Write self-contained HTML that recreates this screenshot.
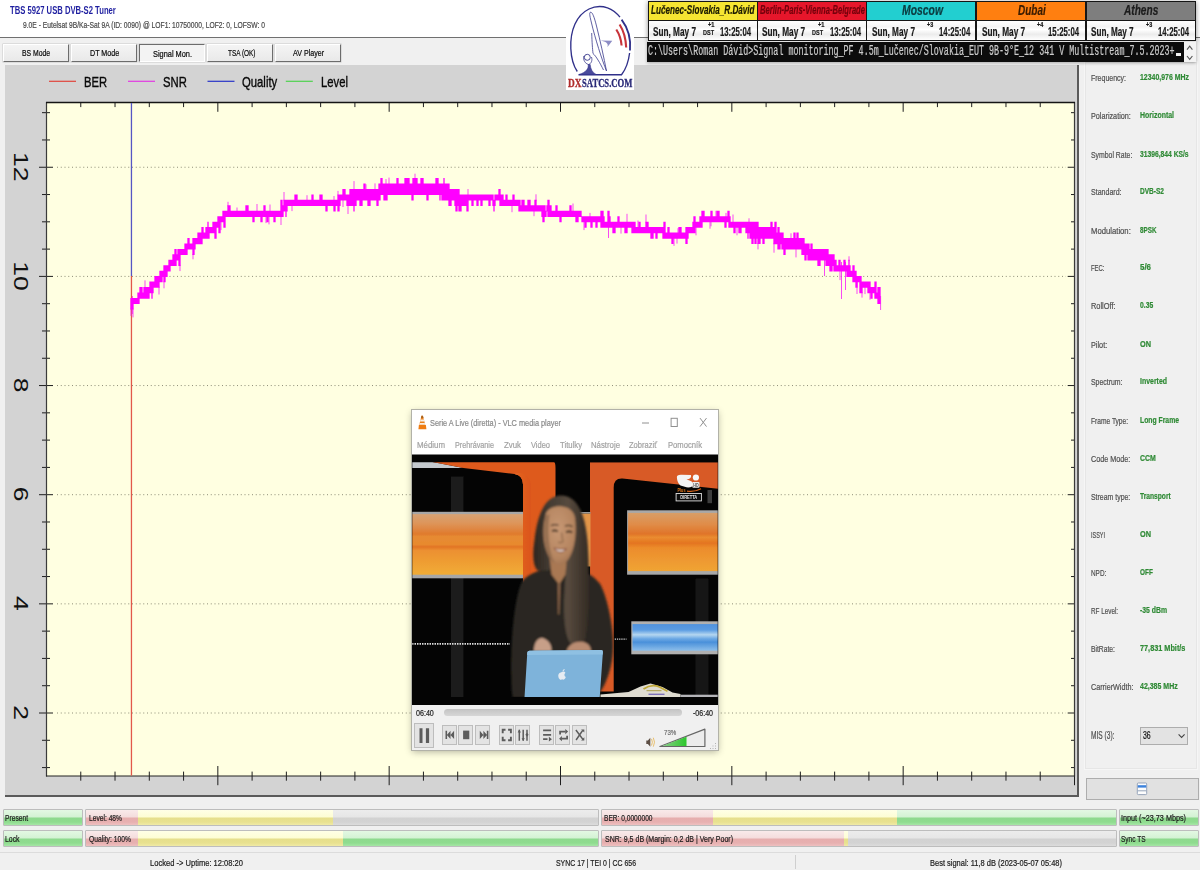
<!DOCTYPE html>
<html><head><meta charset="utf-8"><title>Signal Monitor</title>
<style>
*{box-sizing:border-box;margin:0;padding:0}
html,body{width:1200px;height:870px;overflow:hidden;background:#f0f0f0;font-family:"Liberation Sans",sans-serif}
.a{position:absolute}
#txt .t{position:absolute;display:inline-block;white-space:nowrap;line-height:1;transform-origin:0 50%;-webkit-text-stroke:.22px currentColor}
#topw{left:0;top:0;width:1200px;height:37px;background:#fff}
#topl{left:0;top:37px;width:1200px;height:1px;background:#707070}
.btn{position:absolute;top:43.5px;height:18.5px;background:linear-gradient(#f4f4f4,#e9e9e9);border:1px solid;border-color:#fff #6c6c6c #6c6c6c #fff;box-shadow:0 0 0 .5px #c8c8c8}
.btn.dn{border-color:#6c6c6c #fff #fff #6c6c6c;background:#f3f3f3}
#gp{left:4.5px;top:65px;width:1074.5px;height:732px;background:#d3d3d3;border-right:2px solid #5a5a5a;border-bottom:2px solid #5a5a5a}
#rp{left:1085px;top:62px;width:112px;height:707px;background:#f0f0f0;border:1px solid #e6e6e6;box-shadow:0 0 0 1px #f6f6f6}
#rbtn{left:1085.5px;top:777.5px;width:113px;height:22px;background:#e1e1e1;border:1px solid #adadad}
#combo{left:1140px;top:726.7px;width:47.5px;height:18px;background:#e3e3e3;border:1px solid #adadad}
.bar{position:absolute;height:17px;border:1px solid #bdbdbd;background:#e2e2e2;overflow:hidden;border-radius:1px}
.bar i{position:absolute;top:0;bottom:0;display:block}
.g{background:linear-gradient(#e3f8e3 0,#d3f2d3 48%,#8ed98e 52%,#8fdc8f 80%,#a6e6a6 100%)}
.r{background:linear-gradient(#f9eaea 0,#f4dcdc 48%,#e6aeae 52%,#e7b0b0 80%,#eec0c0 100%)}
.y{background:linear-gradient(#ffffe6 0,#fdfdd3 48%,#e6df8c 52%,#e8e190 80%,#f0eaa6 100%)}
.e{background:linear-gradient(#ececec 0,#e6e6e6 48%,#d2d2d2 52%,#d3d3d3 80%,#dcdcdc 100%)}
#sb{left:0;top:852px;width:1200px;height:18px;background:#f0f0f0;border-top:1px solid #dcdcdc}
#sb i{position:absolute;top:2px;bottom:1px;width:1px;background:#cfcfcf}
#logo{left:566px;top:0;width:68px;height:89.5px;background:#fff}
#clk{left:648px;top:1px;width:548px;height:39.6px;background:#161616;box-shadow:0 1px 5px rgba(0,0,0,.45)}
#clk .h{position:absolute;top:1.2px;height:17.6px}
#clk .d{position:absolute;top:19.8px;height:18.8px;background:linear-gradient(#fff 0,#f4f4f4 30%,#fff 45%,#ececec 70%,#fff 100%)}
#con{left:647.2px;top:42.4px;width:537px;height:19.2px;background:#0c0c0c;box-shadow:0 1px 3px rgba(0,0,0,.3)}
#csb{left:1184px;top:42.4px;width:11.6px;height:19.2px;background:#f3f3f3;box-shadow:0 1px 3px rgba(0,0,0,.3)}
#cur{left:1176px;top:53px;width:5.2px;height:3px;background:#f2f2f2}
#vlc{left:411.5px;top:409.5px;width:306px;height:340.5px;background:#fff;box-shadow:0 0 0 1px #b2b2a8,0 2px 7px rgba(0,0,0,.3)}
#vctl{left:0;top:295.1px;width:306px;height:45.4px;background:#f0f0f0}
.vb{position:absolute;top:315.5px;height:20px;width:15px;background:#e3e3e3;border:1px solid #bdbdbd}
#seek{left:32.3px;top:299px;width:238.3px;height:7px;border-radius:4px;background:linear-gradient(#c4c4c4,#d6d6d6);}

</style></head>
<body>
<div class="a" id="topw"></div><div class="a" id="topl"></div>
<div class="btn" style="left:3px;width:66px"></div>
<div class="btn" style="left:71px;width:66px"></div>
<div class="btn dn" style="left:139px;width:66px"></div>
<div class="btn" style="left:207px;width:66px"></div>
<div class="btn" style="left:275px;width:66px"></div>
<div class="a" id="gp"></div>
<div class="a" id="rp"></div>
<div class="a" id="rbtn"></div>
<div class="a" id="combo"></div>
<svg class="a" style="left:0;top:0" width="1200" height="870" viewBox="0 0 1200 870">
<rect x="46.5" y="102.5" width="1028.0" height="673.5" fill="#ffffe1"/>
<rect x="49" y="80.7" width="27" height="1.2" fill="#e0453c"/>
<rect x="128" y="80.7" width="27" height="1.2" fill="#e23be2"/>
<rect x="207.5" y="80.7" width="27" height="1.2" fill="#2a35c8"/>
<rect x="285.8" y="80.7" width="27" height="1.2" fill="#4fd24f"/>
<line x1="57" x2="1066" y1="713.00" y2="713.00" stroke="#8e8e78" stroke-width="1" stroke-dasharray="1 2.75"/>
<line x1="57" x2="1066" y1="603.85" y2="603.85" stroke="#8e8e78" stroke-width="1" stroke-dasharray="1 2.75"/>
<line x1="57" x2="1066" y1="494.70" y2="494.70" stroke="#8e8e78" stroke-width="1" stroke-dasharray="1 2.75"/>
<line x1="57" x2="1066" y1="385.55" y2="385.55" stroke="#8e8e78" stroke-width="1" stroke-dasharray="1 2.75"/>
<line x1="57" x2="1066" y1="276.40" y2="276.40" stroke="#8e8e78" stroke-width="1" stroke-dasharray="1 2.75"/>
<line x1="57" x2="1066" y1="167.25" y2="167.25" stroke="#8e8e78" stroke-width="1" stroke-dasharray="1 2.75"/>
<path d="M80.77 102.5V107.1M80.77 771.6V780.7M115.03 102.5V107.1M115.03 771.6V780.7M149.30 102.5V107.1M149.30 771.6V780.7M183.57 102.5V107.1M183.57 771.6V780.7M217.83 102.5V111.8M217.83 766.0V785.2M252.10 102.5V107.1M252.10 771.6V780.7M286.37 102.5V107.1M286.37 771.6V780.7M320.63 102.5V107.1M320.63 771.6V780.7M354.90 102.5V107.1M354.90 771.6V780.7M389.17 102.5V111.8M389.17 766.0V785.2M423.43 102.5V107.1M423.43 771.6V780.7M457.70 102.5V107.1M457.70 771.6V780.7M491.97 102.5V107.1M491.97 771.6V780.7M526.23 102.5V107.1M526.23 771.6V780.7M560.50 102.5V111.8M560.50 766.0V785.2M594.77 102.5V107.1M594.77 771.6V780.7M629.03 102.5V107.1M629.03 771.6V780.7M663.30 102.5V107.1M663.30 771.6V780.7M697.57 102.5V107.1M697.57 771.6V780.7M731.83 102.5V111.8M731.83 766.0V785.2M766.10 102.5V107.1M766.10 771.6V780.7M800.37 102.5V107.1M800.37 771.6V780.7M834.63 102.5V107.1M834.63 771.6V780.7M868.90 102.5V107.1M868.90 771.6V780.7M903.17 102.5V111.8M903.17 766.0V785.2M937.43 102.5V107.1M937.43 771.6V780.7M971.70 102.5V107.1M971.70 771.6V780.7M1005.97 102.5V107.1M1005.97 771.6V780.7M1040.23 102.5V107.1M1040.23 771.6V780.7M1074.50 102.5V111.8M1074.50 766.0V785.2M42.0 767.58H50.0M1071.0 767.58H1074.5M42.0 740.29H50.0M1071.0 740.29H1074.5M39.0 713.00H53.0M1067.7 713.00H1074.5M42.0 685.71H50.0M1071.0 685.71H1074.5M42.0 658.42H50.0M1071.0 658.42H1074.5M42.0 631.14H50.0M1071.0 631.14H1074.5M39.0 603.85H53.0M1067.7 603.85H1074.5M42.0 576.56H50.0M1071.0 576.56H1074.5M42.0 549.27H50.0M1071.0 549.27H1074.5M42.0 521.99H50.0M1071.0 521.99H1074.5M39.0 494.70H53.0M1067.7 494.70H1074.5M42.0 467.41H50.0M1071.0 467.41H1074.5M42.0 440.12H50.0M1071.0 440.12H1074.5M42.0 412.84H50.0M1071.0 412.84H1074.5M39.0 385.55H53.0M1067.7 385.55H1074.5M42.0 358.26H50.0M1071.0 358.26H1074.5M42.0 330.97H50.0M1071.0 330.97H1074.5M42.0 303.69H50.0M1071.0 303.69H1074.5M39.0 276.40H53.0M1067.7 276.40H1074.5M42.0 249.11H50.0M1071.0 249.11H1074.5M42.0 221.82H50.0M1071.0 221.82H1074.5M42.0 194.54H50.0M1071.0 194.54H1074.5M39.0 167.25H53.0M1067.7 167.25H1074.5M42.0 139.96H50.0M1071.0 139.96H1074.5M42.0 112.67H50.0M1071.0 112.67H1074.5" stroke="#1e1e1e" stroke-width="1" fill="none"/>
<path d="M46.5 776.5V102.5H1074.5V776.5" stroke="#3a3a3a" stroke-width="1.2" fill="none"/>
<path d="M46.0 776.0H1075.0" stroke="#222" stroke-width="1.15" fill="none"/>
<path d="M46.0 102.5H1075.0" stroke="#151515" stroke-width="1.3" fill="none"/>
<text transform="translate(13.6 712.5) rotate(90) scale(1 .78)" text-anchor="middle" font-family="Liberation Sans,sans-serif" font-size="26.5" fill="#111">2</text>
<text transform="translate(13.6 603.4) rotate(90) scale(1 .78)" text-anchor="middle" font-family="Liberation Sans,sans-serif" font-size="26.5" fill="#111">4</text>
<text transform="translate(13.6 494.2) rotate(90) scale(1 .78)" text-anchor="middle" font-family="Liberation Sans,sans-serif" font-size="26.5" fill="#111">6</text>
<text transform="translate(13.6 385.0) rotate(90) scale(1 .78)" text-anchor="middle" font-family="Liberation Sans,sans-serif" font-size="26.5" fill="#111">8</text>
<text transform="translate(13.6 275.9) rotate(90) scale(1 .78)" text-anchor="middle" font-family="Liberation Sans,sans-serif" font-size="26.5" fill="#111">10</text>
<text transform="translate(13.6 166.8) rotate(90) scale(1 .78)" text-anchor="middle" font-family="Liberation Sans,sans-serif" font-size="26.5" fill="#111">12</text>
<rect x="130.8" y="103" width="1.3" height="173" fill="#5656c4"/>
<rect x="130.8" y="276" width="1.3" height="499.6" fill="#e2584a"/>
<path d="M131 308.6V315.9M133 308.6V317.4M145 280.4V288.0M159 286.8V294.5M164 281.3V288.3M180 264.9V271.1M193 254.0V259.3M221 221.3V230.1M228 201.8V206.3M237 207.5V211.8M257 204.0V211.8M266 215.9V223.1M269 215.9V224.4M270 204.5V211.8M281 215.9V225.0M284 192.0V200.8M292 205.0V211.1M307 195.2V200.8M334 196.0V200.8M338 190.9V195.4M343 199.5V207.0M348 205.0V214.0M354 181.1V190.0M366 184.3V190.0M375 183.4V190.0M386 179.1V184.5M389 177.6V184.5M415 173.7V179.0M468 189.0V195.4M512 205.0V212.2M534 210.4V216.2M536 194.3V200.8M573 203.5V211.8M584 221.3V230.1M590 212.9V217.2M621 226.8V233.6M627 213.8V222.7M638 220.5V228.1M646 214.5V222.7M674 237.7V245.9M677 237.7V243.6M678 228.2V233.6M696 226.8V235.3M710 221.3V228.7M711 221.3V226.3M716 210.8V217.2M726 212.9V217.2M733 214.5V222.7M737 226.8V235.3M749 218.3V222.7M758 243.1V249.4M774 243.2V252.7M791 233.3V239.0M796 248.6V257.4M840 270.4V280.1M849 256.3V260.8M862 292.2V297.6M865 286.8V294.1M870 292.2V299.7M841.5 262V299M845.5 262V290M824.5 250V276M880.6 296V310M132.4 296V314M608.5 224V238M857 276V294" stroke="#f81cf8" stroke-width="1" fill="none" opacity=".8"/>
<path d="M131 297.9V309.6M132 297.9V309.6M133 297.9V309.6M134 297.9V304.1M135 297.9V304.1M136 297.9V304.1M137 297.9V304.1M138 292.5V304.1M139 292.5V304.1M140 287.1V298.7M141 287.1V298.7M142 287.1V298.7M143 292.5V298.7M144 287.0V298.7M145 287.0V298.7M146 287.0V298.7M147 287.0V298.7M148 287.0V298.7M149 287.0V298.7M150 281.6V293.2M151 281.6V293.2M152 281.6V298.7M153 281.6V293.2M154 281.6V287.8M155 276.1V287.8M156 276.1V287.8M157 276.1V287.8M158 276.1V287.8M159 276.1V287.8M160 270.7V282.3M161 270.7V282.3M162 270.7V282.3M163 270.7V276.9M164 265.2V282.3M165 265.2V282.3M166 265.2V276.9M167 265.2V276.9M168 265.2V271.4M169 259.8V271.4M170 259.8V271.4M171 259.8V266.0M172 259.8V266.0M173 254.3V266.0M174 254.3V266.0M175 248.9V266.0M176 248.9V266.0M177 254.3V260.5M178 248.9V260.5M179 248.9V265.9M180 248.9V265.9M181 248.9V255.0M182 248.9V255.0M183 248.9V255.0M184 248.9V255.0M185 243.5V255.0M186 243.5V255.0M187 243.5V255.0M188 238.0V249.6M189 238.0V249.6M190 243.5V249.6M191 243.5V249.6M192 243.5V249.6M193 238.0V255.0M194 238.0V255.0M195 238.0V249.6M196 238.0V244.2M197 238.0V244.2M198 232.6V244.2M199 232.6V244.2M200 232.6V244.2M201 232.6V244.2M202 227.1V244.2M203 227.1V238.7M204 232.6V238.7M205 232.6V238.7M206 227.1V238.7M207 227.1V238.7M208 221.7V238.7M209 227.1V238.7M210 227.1V233.2M211 227.1V233.2M212 227.1V233.2M213 221.7V233.2M214 221.7V233.2M215 221.7V238.7M216 221.7V238.7M217 221.7V227.8M218 216.2V227.8M219 216.2V233.2M220 216.2V233.2M221 216.2V222.3M222 216.2V222.3M223 210.8V222.3M224 210.8V227.8M225 210.8V227.8M226 210.8V216.9M227 210.8V216.9M228 205.3V216.9M229 205.3V216.9M230 205.3V216.9M231 210.8V216.9M232 210.8V216.9M233 210.8V216.9M234 210.8V216.9M235 210.8V216.9M236 210.8V216.9M237 210.8V216.9M238 210.8V216.9M239 210.8V216.9M240 210.8V216.9M241 210.8V216.9M242 210.8V216.9M243 210.8V216.9M244 210.8V216.9M245 210.8V216.9M246 205.3V216.9M247 205.3V216.9M248 205.3V216.9M249 210.8V216.9M250 210.8V216.9M251 210.8V216.9M252 210.8V216.9M253 210.8V222.3M254 210.8V222.3M255 210.8V216.9M256 210.8V216.9M257 210.8V216.9M258 210.8V216.9M259 210.8V216.9M260 210.8V216.9M261 210.8V222.3M262 210.8V222.3M263 210.8V216.9M264 205.3V216.9M265 205.3V216.9M266 210.8V216.9M267 210.8V222.3M268 210.8V222.3M269 210.8V216.9M270 210.8V216.9M271 210.8V216.9M272 210.8V216.9M273 210.8V216.9M274 210.8V222.3M275 210.8V222.3M276 210.8V216.9M277 210.8V216.9M278 210.8V216.9M279 210.8V216.9M280 210.8V216.9M281 199.8V216.9M282 199.8V216.9M283 205.3V216.9M284 199.8V211.4M285 199.8V211.4M286 199.8V216.9M287 199.8V211.4M288 199.8V206.0M289 199.8V206.0M290 199.8V206.0M291 199.8V206.0M292 199.8V206.0M293 199.8V206.0M294 199.8V206.0M295 194.4V206.0M296 194.4V206.0M297 194.4V206.0M298 199.8V206.0M299 199.8V206.0M300 199.8V206.0M301 199.8V206.0M302 199.8V206.0M303 199.8V206.0M304 199.8V206.0M305 199.8V206.0M306 199.8V206.0M307 199.8V206.0M308 199.8V206.0M309 199.8V206.0M310 199.8V206.0M311 199.8V206.0M312 194.4V206.0M313 194.4V206.0M314 199.8V206.0M315 199.8V206.0M316 199.8V206.0M317 199.8V206.0M318 199.8V206.0M319 199.8V206.0M320 194.4V206.0M321 194.4V206.0M322 194.4V206.0M323 199.8V206.0M324 199.8V206.0M325 199.8V206.0M326 199.8V211.4M327 199.8V211.4M328 199.8V206.0M329 199.8V206.0M330 199.8V206.0M331 199.8V206.0M332 199.8V206.0M333 199.8V206.0M334 199.8V211.4M335 199.8V211.4M336 199.8V206.0M337 199.8V206.0M338 194.4V211.4M339 194.4V211.4M340 194.4V206.0M341 194.4V200.5M342 194.4V200.5M343 189.0V200.5M344 189.0V200.5M345 189.0V200.5M346 194.4V200.5M347 194.4V206.0M348 194.4V206.0M349 194.4V206.0M350 189.0V206.0M351 189.0V206.0M352 189.0V206.0M353 189.0V206.0M354 189.0V211.4M355 189.0V206.0M356 189.0V206.0M357 189.0V200.5M358 189.0V200.5M359 189.0V200.5M360 189.0V206.0M361 189.0V206.0M362 189.0V206.0M363 189.0V200.5M364 183.5V200.5M365 183.5V200.5M366 189.0V200.5M367 189.0V200.5M368 189.0V206.0M369 189.0V206.0M370 189.0V206.0M371 189.0V200.5M372 189.0V200.5M373 189.0V200.5M374 189.0V200.5M375 189.0V200.5M376 189.0V200.5M377 189.0V206.0M378 189.0V206.0M379 183.5V200.5M380 183.5V200.5M381 178.1V195.1M382 178.1V195.1M383 183.5V195.1M384 183.5V200.5M385 183.5V200.5M386 183.5V200.5M387 183.5V200.5M388 183.5V195.1M389 183.5V195.1M390 183.5V195.1M391 183.5V195.1M392 183.5V195.1M393 183.5V195.1M394 183.5V195.1M395 183.5V195.1M396 183.5V195.1M397 178.1V195.1M398 178.1V195.1M399 183.5V195.1M400 183.5V195.1M401 183.5V195.1M402 183.5V195.1M403 183.5V195.1M404 183.5V195.1M405 178.1V195.1M406 178.1V195.1M407 178.0V195.1M408 178.0V195.1M409 178.0V195.1M410 183.5V195.1M411 183.5V195.1M412 183.5V200.5M413 178.0V200.5M414 178.0V195.1M415 178.0V195.1M416 178.1V195.1M417 178.1V195.1M418 183.5V195.1M419 183.5V195.1M420 183.5V195.1M421 178.1V195.1M422 178.1V195.1M423 178.1V195.1M424 183.5V195.1M425 183.5V195.1M426 183.5V195.1M427 183.5V200.5M428 183.5V200.5M429 183.5V195.1M430 183.5V195.1M431 183.5V195.1M432 183.5V195.1M433 183.5V195.1M434 183.5V195.1M435 183.5V195.1M436 178.1V195.1M437 178.1V195.1M438 178.1V195.1M439 183.5V195.1M440 183.5V200.5M441 183.5V195.1M442 183.5V200.5M443 183.5V200.5M444 178.1V200.5M445 183.5V200.5M446 183.5V200.5M447 183.5V200.5M448 183.5V200.5M449 183.5V206.0M450 189.0V206.0M451 189.0V206.0M452 189.0V200.5M453 189.0V200.5M454 189.0V200.5M455 189.0V206.0M456 189.0V211.4M457 189.0V211.4M458 189.0V206.0M459 189.0V211.4M460 194.4V211.4M461 194.4V211.4M462 194.4V206.0M463 194.4V206.0M464 194.4V206.0M465 194.4V206.0M466 194.4V206.0M467 194.4V211.4M468 194.4V211.4M469 194.4V200.5M470 194.4V200.5M471 194.4V200.5M472 194.4V206.0M473 194.4V206.0M474 194.4V200.5M475 194.4V200.5M476 194.4V200.5M477 194.4V206.0M478 194.4V206.0M479 194.4V200.5M480 194.4V200.5M481 194.4V206.0M482 194.4V206.0M483 194.4V200.5M484 194.4V200.5M485 194.4V200.5M486 194.4V200.5M487 194.4V200.5M488 194.4V200.5M489 194.4V206.0M490 194.4V206.0M491 194.4V200.5M492 194.4V200.5M493 194.4V206.0M494 199.8V211.4M495 194.4V206.0M496 194.4V200.5M497 194.4V200.5M498 194.4V200.5M499 189.0V200.5M500 189.0V206.0M501 194.4V206.0M502 194.4V206.0M503 194.4V206.0M504 199.8V206.0M505 199.8V206.0M506 194.4V206.0M507 194.4V206.0M508 199.8V206.0M509 199.8V206.0M510 199.8V206.0M511 199.8V206.0M512 199.8V206.0M513 194.4V206.0M514 194.4V206.0M515 199.8V206.0M516 199.8V206.0M517 199.8V206.0M518 199.8V206.0M519 199.8V211.4M520 199.8V211.4M521 205.3V211.4M522 199.8V211.4M523 199.8V211.4M524 199.8V211.4M525 205.3V211.4M526 205.3V211.4M527 205.3V211.4M528 199.8V211.4M529 199.8V211.4M530 199.8V211.4M531 205.3V211.4M532 205.3V211.4M533 205.3V211.4M534 205.3V211.4M535 199.8V211.4M536 199.8V211.4M537 205.3V211.4M538 205.3V211.4M539 205.3V211.4M540 205.3V211.4M541 205.3V211.4M542 205.3V216.9M543 205.3V222.3M544 205.3V222.3M545 205.3V216.9M546 210.8V216.9M547 205.3V211.4M548 199.8V216.9M549 199.8V216.9M550 205.3V216.9M551 205.3V216.9M552 210.8V216.9M553 210.8V216.9M554 210.8V216.9M555 210.8V216.9M556 205.3V216.9M557 205.3V216.9M558 210.8V216.9M559 210.8V216.9M560 210.8V222.3M561 210.8V222.3M562 210.8V216.9M563 210.8V216.9M564 210.8V216.9M565 210.8V216.9M566 210.8V216.9M567 210.8V216.9M568 210.8V216.9M569 210.8V216.9M570 205.3V216.9M571 205.3V216.9M572 210.8V216.9M573 210.8V216.9M574 210.8V216.9M575 210.8V216.9M576 210.8V222.3M577 210.8V222.3M578 210.8V222.3M579 210.8V216.9M580 210.8V216.9M581 210.8V216.9M582 216.2V222.3M583 216.2V222.3M584 216.2V222.3M585 216.2V227.8M586 216.2V227.8M587 216.2V222.3M588 216.2V222.3M589 216.2V222.3M590 216.2V222.3M591 216.2V227.8M592 216.2V227.8M593 216.2V222.3M594 216.2V222.3M595 216.2V222.3M596 216.2V227.8M597 216.2V227.8M598 216.2V222.3M599 216.2V222.3M600 216.2V222.3M601 210.8V227.8M602 210.8V227.8M603 210.8V227.8M604 216.2V227.8M605 221.7V227.8M606 221.7V227.8M607 221.7V227.8M608 210.8V227.8M609 210.8V227.8M610 216.2V227.8M611 221.7V227.8M612 221.7V227.8M613 221.7V233.2M614 221.7V233.2M615 221.7V233.2M616 221.7V227.8M617 221.7V227.8M618 216.2V227.8M619 216.2V227.8M620 221.7V227.8M621 221.7V227.8M622 221.7V227.8M623 221.7V227.8M624 221.7V227.8M625 221.7V233.2M626 221.7V233.2M627 221.7V233.2M628 221.7V227.8M629 221.7V227.8M630 221.7V227.8M631 221.7V227.8M632 221.7V233.2M633 221.7V233.2M634 221.7V233.2M635 221.7V233.2M636 227.1V233.2M637 227.1V233.2M638 227.1V233.2M639 221.7V233.2M640 221.7V233.2M641 227.1V233.2M642 227.1V233.2M643 227.1V233.2M644 227.1V233.2M645 227.1V233.2M646 221.7V233.2M647 221.7V233.2M648 221.7V233.2M649 227.1V233.2M650 227.1V233.2M651 227.1V238.7M652 227.1V238.7M653 227.1V238.7M654 227.1V233.2M655 227.1V233.2M656 227.1V238.7M657 227.1V238.7M658 227.1V233.2M659 227.1V233.2M660 227.1V233.2M661 227.1V233.2M662 227.1V233.2M663 227.1V238.7M664 221.7V238.7M665 221.7V238.7M666 232.6V238.7M667 232.6V238.7M668 227.1V238.7M669 227.1V238.7M670 232.6V238.7M671 232.6V238.7M672 232.6V244.1M673 232.6V244.1M674 232.6V238.7M675 232.6V238.7M676 232.6V238.7M677 232.6V238.7M678 232.6V238.7M679 227.1V238.7M680 227.1V238.7M681 227.1V238.7M682 232.6V238.7M683 232.6V238.7M684 232.6V238.7M685 232.6V238.7M686 227.1V244.1M687 227.1V244.1M688 227.1V238.7M689 227.1V233.2M690 227.1V233.2M691 227.1V233.2M692 227.1V233.2M693 221.7V233.2M694 216.2V233.2M695 216.2V233.2M696 221.7V227.8M697 221.7V227.8M698 221.7V227.8M699 221.7V227.8M700 216.2V227.8M701 216.2V227.8M702 210.8V227.8M703 210.8V222.3M704 210.8V222.3M705 216.2V222.3M706 216.2V222.3M707 216.2V222.3M708 216.2V222.3M709 216.2V222.3M710 216.2V222.3M711 210.8V222.3M712 210.8V222.3M713 216.2V222.3M714 216.2V222.3M715 216.2V222.3M716 216.2V222.3M717 210.8V222.3M718 210.8V222.3M719 210.8V222.3M720 216.2V222.3M721 216.2V222.3M722 216.2V222.3M723 216.2V222.3M724 216.2V222.3M725 216.2V227.8M726 216.2V227.8M727 216.2V222.3M728 210.8V222.3M729 210.8V227.8M730 216.2V227.8M731 221.7V227.8M732 221.7V227.8M733 221.7V227.8M734 221.7V233.2M735 221.7V233.2M736 221.7V227.8M737 221.7V227.8M738 221.7V227.8M739 221.7V233.2M740 221.7V233.2M741 221.7V233.2M742 221.7V227.8M743 221.7V227.8M744 221.7V227.8M745 221.7V227.8M746 221.7V233.2M747 221.7V233.2M748 221.7V238.7M749 221.7V233.2M750 221.7V238.7M751 221.7V238.7M752 221.7V244.1M753 221.7V244.1M754 221.7V238.7M755 221.7V244.1M756 221.7V244.1M757 221.7V238.7M758 221.7V244.1M759 227.1V244.1M760 227.1V244.1M761 227.1V238.7M762 227.1V238.7M763 227.1V244.1M764 227.1V244.1M765 227.1V238.7M766 227.1V238.7M767 227.1V238.7M768 227.1V238.7M769 227.1V238.7M770 227.1V238.7M771 221.7V238.7M772 221.7V238.7M773 227.1V238.7M774 227.1V244.2M775 221.7V244.2M776 221.7V244.2M777 232.6V244.2M778 227.1V249.6M779 227.1V249.6M780 232.6V249.6M781 232.6V244.2M782 232.6V249.6M783 232.6V249.6M784 238.0V255.0M785 238.0V255.0M786 238.0V249.6M787 238.0V249.6M788 238.0V249.6M789 238.0V249.6M790 238.0V249.6M791 238.0V249.6M792 238.0V249.6M793 238.0V249.6M794 232.6V249.6M795 232.6V249.6M796 238.0V249.6M797 232.6V249.6M798 232.6V249.6M799 238.0V249.6M800 238.0V249.6M801 238.0V249.6M802 238.0V255.0M803 238.0V255.0M804 238.0V255.0M805 243.5V260.5M806 243.5V260.5M807 243.5V255.0M808 243.5V260.5M809 243.5V260.5M810 248.9V260.5M811 243.5V260.5M812 243.5V260.5M813 248.9V260.5M814 248.9V260.5M815 248.9V260.5M816 248.9V260.5M817 248.9V260.5M818 248.9V265.9M819 248.9V265.9M820 248.9V265.9M821 248.9V260.5M822 248.9V260.5M823 248.9V260.5M824 248.9V260.5M825 248.9V260.5M826 248.9V266.0M827 248.9V266.0M828 248.9V266.0M829 254.3V266.0M830 254.3V271.4M831 254.3V271.4M832 254.3V271.4M833 254.3V266.0M834 254.3V271.4M835 259.8V271.4M836 259.8V271.4M837 265.2V271.4M838 265.2V271.4M839 259.8V271.4M840 259.8V271.4M841 265.2V271.4M842 265.2V271.4M843 265.2V271.4M844 259.8V271.4M845 259.8V271.4M846 265.2V271.4M847 265.2V276.9M848 265.2V276.9M849 259.8V276.9M850 265.2V276.9M851 270.7V276.9M852 270.7V276.9M853 265.2V282.3M854 265.2V282.3M855 270.7V282.3M856 270.7V287.8M857 276.1V287.8M858 276.1V282.3M859 276.1V282.3M860 276.1V293.2M861 276.1V293.2M862 281.6V293.2M863 281.6V287.8M864 281.6V287.8M865 281.6V287.8M866 281.6V287.8M867 281.6V287.8M868 281.6V293.2M869 281.6V293.2M870 281.6V293.2M871 287.0V298.7M872 287.0V298.7M873 287.0V293.2M874 287.0V293.2M875 281.6V298.7M876 281.6V298.7M877 292.5V298.7M878 287.1V304.1M879 287.1V304.1M880 287.1V304.1" stroke="#ff00ff" stroke-width="1.3" fill="none"/>
</svg>
<!-- bottom bars -->
<div class="bar" style="left:3px;top:808.5px;width:80px"><i class="g" style="left:0;right:0"></i></div>
<div class="bar" style="left:3px;top:829.5px;width:80px"><i class="g" style="left:0;right:0"></i></div>
<div class="bar" style="left:85px;top:808.5px;width:513.5px"><i class="e" style="left:0;right:0"></i><i class="r" style="left:0;width:51.5px"></i><i class="y" style="left:51.5px;width:195px"></i></div>
<div class="bar" style="left:85px;top:829.5px;width:513.5px"><i class="g" style="left:0;right:0"></i><i class="r" style="left:0;width:51.5px"></i><i class="y" style="left:51.5px;width:205px"></i></div>
<div class="bar" style="left:601px;top:808.5px;width:515.5px"><i class="g" style="left:0;right:0"></i><i class="r" style="left:0;width:111px"></i><i class="y" style="left:111px;width:184px"></i></div>
<div class="bar" style="left:601px;top:829.5px;width:515.5px"><i class="e" style="left:0;right:0"></i><i class="r" style="left:0;width:242px"></i><i class="y" style="left:242px;width:4px"></i></div>
<div class="bar" style="left:1119px;top:808.5px;width:79.5px"><i class="g" style="left:0;right:0"></i></div>
<div class="bar" style="left:1119px;top:829.5px;width:79.5px"><i class="g" style="left:0;right:0"></i></div>
<div class="a" id="sb"><i style="left:795px"></i></div>
<!-- logo -->
<div class="a" id="logo"><svg class="a" style="left:0;top:0" width="68" height="90" viewBox="566 0 68 90"><path d="M577.3 71.5C569.5 60 568.6 38 575 24C581.5 9.8 595 3.6 607.5 7.8C612.5 9.5 616.5 12.8 620 17.2" fill="none" stroke="#30308a" stroke-width="1.35"/><path d="M621.6 19.6C628 28 631 39 630 50.5" fill="none" stroke="#30308a" stroke-width="1.8"/><path d="M629.6 53C628.5 62 625.5 69.5 621.7 74.5" fill="none" stroke="#30308a" stroke-width="1.35"/><path d="M578.5 74.7H622" fill="none" stroke="#30308a" stroke-width="1.5"/><path d="M616.3 29.5C619.5 34.5 621.2 40 621.6 45.5M619.6 24.5C623.8 31 625.8 39 626.2 47.5" fill="none" stroke="#c8343a" stroke-width="2.1"/><path d="M590 12.5C592 11 594 16 596.5 26C600 40 604 58 606.5 71C602 60 595 38 591.5 23C590 17 589.3 13.5 590 12.5Z" fill="#fff" stroke="#38388c" stroke-width=".8"/><path d="M591.7 33C592 42 592.5 49 593 53.5C596 56 600 63 603.5 70" fill="none" stroke="#38388c" stroke-width=".8"/><path d="M600.8 40.4L612.3 40.8L607.3 47.2C608.4 44 607.8 42.2 600.8 40.4Z" fill="#8c8cc4"/><circle cx="587.3" cy="57.3" r="3" fill="#fff" stroke="#38388c" stroke-width=".9"/><path d="M583.8 56C583 60 585 63.5 588.5 64.5C591.5 63.5 592.5 60.5 591.5 57" fill="none" stroke="#38388c" stroke-width=".8"/><path d="M588.2 64.5C588.6 68.5 586.5 72 579.2 74.4H596C592.5 72.5 590.6 69 590.2 64.5Z" fill="#4a4a9c" stroke="#30308a" stroke-width=".5"/></svg></div>
<!-- clock widget -->
<div class="a" id="clk">
<div class="h" style="left:1.2px;width:107.4px;background:#f6e532"></div>
<div class="h" style="left:109.8px;width:108.2px;background:#e6162b"></div>
<div class="h" style="left:219.2px;width:108.2px;background:#22cfd0"></div>
<div class="h" style="left:328.6px;width:108.2px;background:#ff7f10"></div>
<div class="h" style="left:438.6px;width:108.2px;background:#7e7e7e"></div>
<div class="d" style="left:1.2px;width:107.4px"></div>
<div class="d" style="left:109.8px;width:108.2px"></div>
<div class="d" style="left:219.2px;width:108.2px"></div>
<div class="d" style="left:328.6px;width:108.2px"></div>
<div class="d" style="left:438.6px;width:108.2px"></div>
</div>
<div class="a" style="left:648px;top:40.6px;width:548px;height:1.8px;background:#ececec"></div><div class="a" id="con"></div><div class="a" id="csb"><svg width="12" height="20" viewBox="0 0 12 20"><path d="M3 7.6 L5.7 4.2 L8.4 7.6 M3 14 L5.7 17.4 L8.4 14" fill="none" stroke="#555" stroke-width="1.1"/></svg></div>
<div class="a" id="cur"></div>
<svg class="a" style="left:0;top:0;pointer-events:none" width="1200" height="870" viewBox="0 0 1200 870"><path d="M1178.6 734.3l3 3.2 3-3.2" fill="none" stroke="#444" stroke-width="1.1"/><rect x="1137.3" y="783" width="9.4" height="11.6" rx="1" fill="#fdfdfd" stroke="#8c9cb4" stroke-width=".9"/><rect x="1137.8" y="785.2" width="8.4" height="2.4" fill="#3c82dc"/><path d="M1137.8 790.8h8.4" stroke="#8c9cb4" stroke-width=".9"/></svg>
<!-- VLC -->
<div class="a" id="vlc">
<svg class="a" style="left:0;top:0" width="306" height="341" viewBox="0 0 306 341">
<defs><linearGradient id="og" x1="0" y1="0" x2="0" y2="1"><stop offset="0" stop-color="#d6a274"/><stop offset=".16" stop-color="#de9458"/><stop offset=".33" stop-color="#e07a2c"/><stop offset=".37" stop-color="#e68a32"/><stop offset=".5" stop-color="#e88a2e"/><stop offset=".54" stop-color="#e27426"/><stop offset=".6" stop-color="#ec9030"/><stop offset="1" stop-color="#f1ac36"/></linearGradient><linearGradient id="og2" x1="0" y1="0" x2="0" y2="1"><stop offset="0" stop-color="#d89e68"/><stop offset=".2" stop-color="#e08c48"/><stop offset=".36" stop-color="#e07428"/><stop offset=".42" stop-color="#ea8c30"/><stop offset=".52" stop-color="#e4741f"/><stop offset=".6" stop-color="#ec8c2c"/><stop offset="1" stop-color="#f0a434"/></linearGradient><linearGradient id="bg" x1="0" y1="0" x2="0" y2="1"><stop offset="0" stop-color="#4f92de"/><stop offset=".22" stop-color="#5b9ce2"/><stop offset=".4" stop-color="#b4d6f0"/><stop offset=".55" stop-color="#6ca8e4"/><stop offset=".68" stop-color="#4a90da"/><stop offset="1" stop-color="#8cbeea"/></linearGradient><linearGradient id="hg" x1="0" y1="0" x2="1" y2="0"><stop offset="0" stop-color="#2c2620"/><stop offset=".3" stop-color="#453c33"/><stop offset=".62" stop-color="#574a3e"/><stop offset="1" stop-color="#332b24"/></linearGradient><linearGradient id="pl" x1="0" y1="0" x2="1" y2="0"><stop offset="0" stop-color="#ec742a"/><stop offset=".25" stop-color="#e2601f"/><stop offset="1" stop-color="#db561e"/></linearGradient><radialGradient id="fg" cx=".45" cy=".4" r=".7"><stop offset="0" stop-color="#c79874"/><stop offset=".7" stop-color="#b58560"/><stop offset="1" stop-color="#966a4a"/></radialGradient><filter id="bl" x="-5%" y="-5%" width="110%" height="110%"><feGaussianBlur stdDeviation=".6"/></filter><filter id="bl2" x="-10%" y="-10%" width="120%" height="120%"><feGaussianBlur stdDeviation=".8"/></filter><clipPath id="vc"><rect x="0.3" y="52.2" width="305.4" height="234.8"/></clipPath></defs>
<rect x="0.0" y="44.5" width="306.0" height="250.6" fill="#040404" />
<g clip-path="url(#vc)"><g filter="url(#bl)">
<rect x="39.0" y="66.5" width="12.5" height="221.0" fill="#1b1b1b" />
<rect x="283.5" y="168.5" width="12.8" height="119.0" fill="#151515" />
<rect x="295.5" y="80.0" width="4.5" height="13.2" fill="#3c3c3c" />
<path d="M0.0 52.1L20.5 52.1L51.5 58.1L0.0 58.1Z" fill="#c4c9ce"/>
<path d="M20.5 52.1L142.0 52.1Q143.5 52.5 143.5 58.5L143.5 172.5L111.0 172.5L111.0 74.5Q111.0 65.5 102.5 64.1L51.5 58.1Z" fill="#de5a1f"/>
<path d="M111.0 74.5Q111.0 65.5 102.5 64.1L107.5 62.9Q119.0 64.5 119.0 76.5L119.0 164.5L111.0 168.5Z" fill="url(#pl)"/>
<rect x="0.0" y="101.8" width="111.0" height="66.5" fill="#a6a6a6" />
<rect x="0.0" y="104.1" width="111.0" height="60.6" fill="url(#og)" />
<path d="M178.0 52.3L306.0 52.3L306.0 78.7L210.5 68.5Q201.7 67.9 201.7 77.5L201.7 281.5L178.0 281.5Z" fill="#d85a26"/>
<rect x="166.5" y="102.0" width="12.0" height="1.7" fill="#9a9a9a" />
<rect x="166.5" y="103.7" width="12.0" height="52.8" fill="#e29648" />
<rect x="215.1" y="100.3" width="90.9" height="64.4" fill="#a8a8a8" />
<rect x="216.1" y="102.9" width="89.9" height="58.2" fill="url(#og2)" />
<rect x="219.3" y="211.3" width="86.7" height="33.0" fill="#b0b0b0" />
<rect x="220.5" y="214.1" width="85.5" height="26.6" fill="url(#bg)" />
<path d="M0.0 233.9L98.0 233.9" stroke="#dcdcdc" stroke-width="1.9" stroke-dasharray="1.5 1" fill="none"/>
<path d="M202.7 229.1L214.5 229.1" stroke="#cfcfcf" stroke-width="1.2" stroke-dasharray="1.3 .9" fill="none"/>
</g><g filter="url(#bl2)">
<path d="M100.5 287.5C97.0 250.5 100.5 190.5 110.5 170.5C118.5 162.5 130.5 159.5 138.5 156.5L158.5 156.5C168.5 159.5 180.5 163.5 188.5 174.5C196.5 190.5 202.0 220.5 201.0 238.5C200.5 258.5 193.5 274.5 188.5 281.5L188.5 287.5Z" fill="#292822"/>
<path d="M149.0 85.5C132.5 85.5 125.0 106.5 122.5 130.5C120.0 146.5 121.5 156.5 125.5 160.5L136.5 160.5L154.5 146.5L152.0 190.5C151.5 210.5 153.5 226.5 158.5 233.5L172.5 232.5C177.0 215.5 178.0 180.5 176.5 150.5C176.0 116.5 170.5 85.5 149.0 85.5Z" fill="url(#hg)"/>
<path d="M137.5 146.5L155.0 146.5L153.5 164.5L147.1 174.5L139.5 164.5Z" fill="#a97852"/>
<path d="M145.7 173.5L148.3 173.5L147.3 204.5L146.1 204.5Z" fill="#8a6448"/>
<path d="M133.5 105.5C134.5 93.5 160.5 92.5 163.1 107.5C164.9 122.5 163.0 138.5 157.5 147.5C152.5 156.5 143.5 157.0 138.0 148.5C131.5 138.5 129.5 120.5 133.5 105.5Z" fill="url(#fg)"/>
<path d="M133.5 105.5C131.5 120.5 132.0 138.5 138.0 148.5C139.5 150.5 141.0 152.0 142.5 153.0C136.5 140.5 135.0 120.5 137.5 104.5Z" fill="#8c684c" opacity=".8"/>
<path d="M138.9 115.7Q142.5 113.7 146.5 115.3M153.0 115.9Q157.0 114.5 160.5 116.7" stroke="#3b2a1e" stroke-width="1.2" fill="none"/>
<path d="M140.1 121.1Q142.9 119.5 145.7 121.5M154.1 122.1Q157.3 120.5 160.1 122.5" stroke="#2e2018" stroke-width="1.9" fill="none"/>
<path d="M149.5 122.5L150.9 131.5Q148.9 133.5 146.3 132.1" stroke="#916a4c" stroke-width="1.3" fill="none"/>
<path d="M141.9 138.1Q148.1 145.7 154.5 138.9Q148.1 140.7 141.9 138.1Z" fill="#f8f3ee" stroke="#7a3c2c" stroke-width=".9"/>
<path d="M122.0 241.0C121.5 232.5 126.5 227.0 130.5 228.0C136.5 229.5 140.0 235.5 139.5 241.0Z" fill="#c79f88"/>
<path d="M154.5 241.0C156.5 233.5 164.5 230.5 171.5 232.0C177.0 233.5 179.0 237.5 179.0 241.0Z" fill="#b98c72"/>
</g><g filter="url(#bl)">
<path d="M188.5 284.5L216.5 282.0L228.5 276.5L238.5 273.5L250.5 277.0L260.5 282.5L268.5 284.1L268.5 287.5L188.5 287.5Z" fill="#dedbd0"/>
<path d="M231.5 279.0Q239.5 273.5 247.5 277.0L255.5 281.3" stroke="#bfa838" stroke-width="1.8" fill="none"/>
<path d="M234.5 280.7L249.5 280.7" stroke="#a89a48" stroke-width="1" fill="none"/>
<path d="M236.5 284.3L252.5 284.3" stroke="#7d70b8" stroke-width="1.4" fill="none"/>
<rect x="268.5" y="284.7" width="37.5" height="2.8" fill="#b4b4b8" />
<path d="M115.3 242.5Q115.5 240.7 117.5 240.7L189.1 239.9Q191.1 239.9 190.9 241.9L187.7 287.5L112.5 287.5Z" fill="#7eb3da"/>
<path d="M115.3 242.5Q115.5 240.7 117.5 240.7L189.1 239.9Q191.1 239.9 190.9 241.9L190.7 244.5L115.1 245.1Z" fill="#8fc0e2"/>
<path d="M149.0 262.5c1.4 -1.6 3.6 -1.4 4.4 .2c-1.6 1.4 -1.2 3.4 .4 4.2c-.8 2.2 -2.4 3.4 -3.6 2.4c-1.2 1 -3.2 .2 -3.8 -2.4c-.6 -2.4 .8 -4.8 2.6 -4.4zM150.5 261.1c.2 -1.2 1 -2 2.2 -2.2c0 1.2 -1 2.2 -2.2 2.2z" fill="#e6ecf2"/>
<path d="M264.9 67.5Q264.5 64.5 269.5 64.7L279.0 65.1Q280.0 68.9 274.5 69.5Q281.5 71.0 281.1 74.5Q280.5 77.9 274.5 77.3L268.5 75.5Q265.1 72.5 264.9 67.5Z" fill="#f4f4f4"/>
<circle cx="283.9" cy="67.5" r="3.1" fill="#f8f8f8"/>
<rect x="280.3" y="71.9" width="7.2" height="5.9" fill="#ececec" rx="1"/>
<text x="283.9" y="76.9" font-family="Liberation Sans,sans-serif" font-size="4.6" font-weight="bold" fill="#555" text-anchor="middle" textLength="5.4" lengthAdjust="spacingAndGlyphs">HD</text>
<text x="265.5" y="82.3" font-family="Liberation Sans,sans-serif" font-size="4.8" font-weight="bold" fill="#e67a1c" textLength="8" lengthAdjust="spacingAndGlyphs">Plus</text>
<path d="M275.0 81.1Q282.5 82.3 289.0 78.7" stroke="#d8641a" stroke-width="1.1" fill="none"/>
<rect x="264.1" y="83.5" width="25.3" height="7.4" fill="#0c0c0c" stroke="#e0e0e0" stroke-width=".9"/>
<text x="276.7" y="89.3" font-family="Liberation Sans,sans-serif" font-size="4.6" font-weight="bold" fill="#e8e8e8" text-anchor="middle" textLength="17" lengthAdjust="spacingAndGlyphs">DIRETTA</text>
</g></g>
</svg>
<div class="a" id="vctl"></div>
<div class="a" id="seek"></div>
<div class="vb" style="left:30.5px"></div><div class="vb" style="left:46.5px"></div><div class="vb" style="left:63.0px"></div><div class="vb" style="left:87.0px"></div><div class="vb" style="left:103.0px"></div><div class="vb" style="left:127.5px"></div><div class="vb" style="left:143.5px"></div><div class="vb" style="left:160.0px"></div><div class="vb" style="left:2.5px;top:313.0px;width:19.5px;height:25.5px"></div><svg class="a" style="left:0;top:0" width="306" height="341" viewBox="411.5 409.5 306 341"><path d="M419 727.8h3v14.8h-3zM425.4 727.8h3.2v14.8h-3.2z" fill="#5c5c5c"/><g transform="translate(0 -0.7)"><path d="M445 731h1.6v8.2H445zM450 735.1L453.6 731v8.2zM446.4 735.1L450 731v8.2z" fill="#5c5c5c"/><rect x="462.6" y="730.8" width="6.2" height="8.6" fill="#5c5c5c"/><path d="M486.3 731h1.6v8.2h-1.6zM482.9 735.1L479.3 731v8.2zM486.5 735.1L482.9 731v8.2z" fill="#5c5c5c"/><path d="M502.2 733.4v-3.4h2.8M507.6 730h2.8v3.4M510.4 737v3.4h-2.8M505 740.4h-2.8v-3.4" fill="none" stroke="#5c5c5c" stroke-width="1.9"/><path d="M518.8 730v11M522.7 730v11M526.5 730v11" fill="none" stroke="#5c5c5c" stroke-width="1.5"/><path d="M517.2 732.6l1.6-2.8 1.6 2.8zM521.1 738.4l1.6 2.8 1.6-2.8zM524.9 735l1.6-2 1.6 2-1.6 2z" fill="#5c5c5c"/><path d="M542.6 730.6h8M542.6 735h8M542.6 739.4h4.4" fill="none" stroke="#5c5c5c" stroke-width="1.8"/><path d="M548.4 737l3 2.4-3 2.4z" fill="#5c5c5c"/><path d="M559.6 734.6v-2.8h5.4M566.6 736v2.9h-5.6" fill="none" stroke="#5c5c5c" stroke-width="1.8"/><path d="M564.8 729.2l2.8 2.6-2.8 2.6zM561.4 736.3l-2.8 2.6 2.8 2.6z" fill="#5c5c5c"/><path d="M575.4 730.2l7 9.4M575.6 740.2l6.6-9.6" fill="none" stroke="#5c5c5c" stroke-width="1.5"/><path d="M580.6 729.6h3.2v3.2zM580.6 740.6h3.2v-3.2z" fill="#5c5c5c"/></g><path d="M645.8 740h1.6l2.4-2.8v9l-2.4-2.8h-1.6z" fill="#5c4e44"/><path d="M651 738.4q1.8 3.3 0 6.6M652.8 737.2q2.4 4.5 0 9" fill="none" stroke="#e8c070" stroke-width="1"/><path d="M659.4 746L704.4 728.6V746Z" fill="#ececec" stroke="#666" stroke-width="1.2" stroke-linejoin="round"/><defs><linearGradient id="vg" x1="0" y1="0" x2="1" y2="0"><stop offset="0" stop-color="#8ccc8c"/><stop offset="1" stop-color="#2cc82c"/></linearGradient></defs><path d="M661.6 745.4L686 736.2V745.4Z" fill="url(#vg)"/><path d="M714.5 742.5h1v1h-1zM714.5 745h1v1h-1zM712 745h1v1h-1zM714.5 747.5h1v1h-1zM712 747.5h1v1h-1zM709.5 747.5h1v1h-1z" fill="#b4b4b4"/><path d="M421 415.2l1.4 0 2.4 9.6h-6.2z" fill="#e8801c"/><path d="M421 415.2l1.4 0 .6 2.4h-2.6z" fill="#a8601c"/><path d="M420 419h3.4l.5 1.9h-4.4zM419.1 422.6h5.2l.4 1.6h-6z" fill="#f8efe4"/><path d="M418.4 424.4h7l.5 4.4h-8z" fill="#ee7c12"/><path d="M641.5 422.5h7" stroke="#909090" stroke-width="1" fill="none"/><rect x="670.6" y="417.8" width="6.2" height="8.2" stroke="#909090" stroke-width="1" fill="none"/><path d="M699.5 417.6l6.5 8.5M706 417.6l-6.5 8.5" stroke="#909090" stroke-width="1" fill="none"/></svg>
</div>

<div id="txt">
<span class="t" id="t0" style="left:10.0px;top:5.1px;font-size:10.5px;color:#1f1fa0;font-weight:bold;transform:scaleX(0.7292);-webkit-text-stroke:0;">TBS 5927 USB DVB-S2 Tuner</span>
<span class="t" id="t1" style="left:23.0px;top:20.4px;font-size:9.5px;color:#4a4a4a;transform:scaleX(0.7073);">9.0E - Eutelsat 9B/Ka-Sat 9A (ID: 0090) @ LOF1: 10750000, LOF2: 0, LOFSW: 0</span>
<span class="t" id="t2" style="left:22.0px;top:48.2px;font-size:9.5px;color:#0a0a0a;transform:scaleX(0.7165);">BS Mode</span>
<span class="t" id="t3" style="left:89.5px;top:48.2px;font-size:9.5px;color:#0a0a0a;transform:scaleX(0.7505);">DT Mode</span>
<span class="t" id="t4" style="left:153.0px;top:49.0px;font-size:9.5px;color:#0a0a0a;transform:scaleX(0.7773);">Signal Mon.</span>
<span class="t" id="t5" style="left:227.5px;top:48.2px;font-size:9.5px;color:#0a0a0a;transform:scaleX(0.6764);">TSA (OK)</span>
<span class="t" id="t6" style="left:293.0px;top:48.2px;font-size:9.5px;color:#0a0a0a;transform:scaleX(0.7461);">AV Player</span>
<span class="t" id="t7" style="left:84.0px;top:74.5px;font-size:14.5px;color:#080808;transform:scaleX(0.7711);-webkit-text-stroke:.35px #080808;">BER</span>
<span class="t" id="t8" style="left:163.0px;top:74.5px;font-size:14.5px;color:#080808;transform:scaleX(0.7771);-webkit-text-stroke:.35px #080808;">SNR</span>
<span class="t" id="t9" style="left:241.8px;top:74.5px;font-size:14.5px;color:#080808;transform:scaleX(0.7798);-webkit-text-stroke:.35px #080808;">Quality</span>
<span class="t" id="t10" style="left:321.0px;top:74.5px;font-size:14.5px;color:#080808;transform:scaleX(0.7787);-webkit-text-stroke:.35px #080808;">Level</span>
<span class="t" id="t11" style="left:1090.5px;top:73.1px;font-size:9.6px;color:#505050;transform:scaleX(0.7292);">Frequency:</span>
<span class="t" id="t12" style="left:1140.0px;top:73.0px;font-size:9.3px;color:#2f8a35;font-weight:bold;transform:scaleX(0.7450);">12340,976 MHz</span>
<span class="t" id="t13" style="left:1090.5px;top:111.3px;font-size:9.6px;color:#505050;transform:scaleX(0.7538);">Polarization:</span>
<span class="t" id="t14" style="left:1140.0px;top:111.2px;font-size:9.3px;color:#2f8a35;font-weight:bold;transform:scaleX(0.7480);">Horizontal</span>
<span class="t" id="t15" style="left:1090.5px;top:149.6px;font-size:9.6px;color:#505050;transform:scaleX(0.7171);">Symbol Rate:</span>
<span class="t" id="t16" style="left:1140.0px;top:149.5px;font-size:9.3px;color:#2f8a35;font-weight:bold;transform:scaleX(0.7232);">31396,844 KS/s</span>
<span class="t" id="t17" style="left:1090.5px;top:187.4px;font-size:9.6px;color:#505050;transform:scaleX(0.7330);">Standard:</span>
<span class="t" id="t18" style="left:1140.0px;top:187.3px;font-size:9.3px;color:#2f8a35;font-weight:bold;transform:scaleX(0.7036);">DVB-S2</span>
<span class="t" id="t19" style="left:1090.5px;top:225.6px;font-size:9.6px;color:#505050;transform:scaleX(0.8023);">Modulation:</span>
<span class="t" id="t20" style="left:1140.0px;top:225.5px;font-size:9.3px;color:#2f8a35;font-weight:bold;transform:scaleX(0.6791);">8PSK</span>
<span class="t" id="t21" style="left:1090.5px;top:263.1px;font-size:9.6px;color:#505050;transform:scaleX(0.6176);">FEC:</span>
<span class="t" id="t22" style="left:1140.0px;top:263.1px;font-size:9.3px;color:#2f8a35;font-weight:bold;transform:scaleX(0.8502);">5/6</span>
<span class="t" id="t23" style="left:1090.5px;top:301.3px;font-size:9.6px;color:#505050;transform:scaleX(0.7701);">RollOff:</span>
<span class="t" id="t24" style="left:1140.0px;top:301.2px;font-size:9.3px;color:#2f8a35;font-weight:bold;transform:scaleX(0.7289);">0.35</span>
<span class="t" id="t25" style="left:1090.5px;top:339.6px;font-size:9.6px;color:#505050;transform:scaleX(0.7590);">Pilot:</span>
<span class="t" id="t26" style="left:1140.0px;top:339.6px;font-size:9.3px;color:#2f8a35;font-weight:bold;transform:scaleX(0.7884);">ON</span>
<span class="t" id="t27" style="left:1090.5px;top:377.4px;font-size:9.6px;color:#505050;transform:scaleX(0.7203);">Spectrum:</span>
<span class="t" id="t28" style="left:1140.0px;top:377.4px;font-size:9.3px;color:#2f8a35;font-weight:bold;transform:scaleX(0.7464);">Inverted</span>
<span class="t" id="t29" style="left:1090.5px;top:415.6px;font-size:9.6px;color:#505050;transform:scaleX(0.6910);">Frame Type:</span>
<span class="t" id="t30" style="left:1140.0px;top:415.6px;font-size:9.3px;color:#2f8a35;font-weight:bold;transform:scaleX(0.7330);">Long Frame</span>
<span class="t" id="t31" style="left:1090.5px;top:453.6px;font-size:9.6px;color:#505050;transform:scaleX(0.7519);">Code Mode:</span>
<span class="t" id="t32" style="left:1140.0px;top:453.6px;font-size:9.3px;color:#2f8a35;font-weight:bold;transform:scaleX(0.7457);">CCM</span>
<span class="t" id="t33" style="left:1090.5px;top:491.6px;font-size:9.6px;color:#505050;transform:scaleX(0.7226);">Stream type:</span>
<span class="t" id="t34" style="left:1140.0px;top:491.6px;font-size:9.3px;color:#2f8a35;font-weight:bold;transform:scaleX(0.7158);">Transport</span>
<span class="t" id="t35" style="left:1090.5px;top:529.6px;font-size:9.6px;color:#505050;transform:scaleX(0.5707);">ISSYI</span>
<span class="t" id="t36" style="left:1140.0px;top:529.6px;font-size:9.3px;color:#2f8a35;font-weight:bold;transform:scaleX(0.7884);">ON</span>
<span class="t" id="t37" style="left:1090.5px;top:567.6px;font-size:9.6px;color:#505050;transform:scaleX(0.6675);">NPD:</span>
<span class="t" id="t38" style="left:1140.0px;top:567.6px;font-size:9.3px;color:#2f8a35;font-weight:bold;transform:scaleX(0.6884);">OFF</span>
<span class="t" id="t39" style="left:1090.5px;top:605.6px;font-size:9.6px;color:#505050;transform:scaleX(0.6600);">RF Level:</span>
<span class="t" id="t40" style="left:1140.0px;top:605.6px;font-size:9.3px;color:#2f8a35;font-weight:bold;transform:scaleX(0.7359);">-35 dBm</span>
<span class="t" id="t41" style="left:1090.5px;top:644.0px;font-size:9.6px;color:#505050;transform:scaleX(0.7030);">BitRate:</span>
<span class="t" id="t42" style="left:1140.0px;top:644.0px;font-size:9.3px;color:#2f8a35;font-weight:bold;transform:scaleX(0.7844);">77,831 Mbit/s</span>
<span class="t" id="t43" style="left:1090.5px;top:681.6px;font-size:9.6px;color:#505050;transform:scaleX(0.7520);">CarrierWidth:</span>
<span class="t" id="t44" style="left:1140.0px;top:681.6px;font-size:9.3px;color:#2f8a35;font-weight:bold;transform:scaleX(0.7519);">42,385 MHz</span>
<span class="t" id="t45" style="left:1090.5px;top:730.8px;font-size:10px;color:#505050;transform:scaleX(0.6580);">MIS (3):</span>
<span class="t" id="t46" style="left:1142.7px;top:730.8px;font-size:10px;color:#111;transform:scaleX(0.6921);">36</span>
<span class="t" id="t47" style="left:650.8px;top:4.3px;font-size:12.4px;color:#1a1a00;font-weight:bold;font-style:italic;transform:scaleX(0.6569);">Lučenec-Slovakia_R.Dávid</span>
<span class="t" id="t48" style="left:760.0px;top:4.3px;font-size:12.4px;color:#74000c;font-weight:bold;font-style:italic;transform:scaleX(0.6140);">Berlin-Paris-Vienna-Belgrade</span>
<span class="t" id="t49" style="left:902.0px;top:2.7px;font-size:14.2px;color:#0c3c40;font-weight:bold;font-style:italic;transform:scaleX(0.7326);">Moscow</span>
<span class="t" id="t50" style="left:1017.8px;top:2.7px;font-size:14.2px;color:#3a1c00;font-weight:bold;font-style:italic;transform:scaleX(0.7027);">Dubai</span>
<span class="t" id="t51" style="left:1123.5px;top:2.7px;font-size:14.2px;color:#1c1c1c;font-weight:bold;font-style:italic;transform:scaleX(0.7132);">Athens</span>
<span class="t" id="t52" style="left:653.0px;top:25.5px;font-size:12px;color:#1a1a1a;font-weight:bold;transform:scaleX(0.6859);">Sun, May 7</span>
<span class="t" id="t53" style="left:708.0px;top:21.9px;font-size:6.6px;color:#1a1a1a;font-weight:bold;transform:scaleX(0.8498);">+1</span>
<span class="t" id="t54" style="left:703.0px;top:29.4px;font-size:7.7px;color:#1a1a1a;font-weight:bold;transform:scaleX(0.7154);">DST</span>
<span class="t" id="t55" style="left:720.0px;top:25.5px;font-size:12px;color:#1a1a1a;font-weight:bold;transform:scaleX(0.6452);">13:25:04</span>
<span class="t" id="t56" style="left:762.4px;top:25.5px;font-size:12px;color:#1a1a1a;font-weight:bold;transform:scaleX(0.6891);">Sun, May 7</span>
<span class="t" id="t57" style="left:817.6px;top:21.9px;font-size:6.6px;color:#1a1a1a;font-weight:bold;transform:scaleX(0.8498);">+1</span>
<span class="t" id="t58" style="left:812.4px;top:29.4px;font-size:7.7px;color:#1a1a1a;font-weight:bold;transform:scaleX(0.7154);">DST</span>
<span class="t" id="t59" style="left:829.6px;top:25.5px;font-size:12px;color:#1a1a1a;font-weight:bold;transform:scaleX(0.6452);">13:25:04</span>
<span class="t" id="t60" style="left:872.0px;top:25.5px;font-size:12px;color:#1a1a1a;font-weight:bold;transform:scaleX(0.6859);">Sun, May 7</span>
<span class="t" id="t61" style="left:927.4px;top:21.9px;font-size:6.6px;color:#1a1a1a;font-weight:bold;transform:scaleX(0.8232);">+3</span>
<span class="t" id="t62" style="left:938.7px;top:25.5px;font-size:12px;color:#1a1a1a;font-weight:bold;transform:scaleX(0.6514);">14:25:04</span>
<span class="t" id="t63" style="left:981.8px;top:25.5px;font-size:12px;color:#1a1a1a;font-weight:bold;transform:scaleX(0.6891);">Sun, May 7</span>
<span class="t" id="t64" style="left:1037.0px;top:21.9px;font-size:6.6px;color:#1a1a1a;font-weight:bold;transform:scaleX(0.8232);">+4</span>
<span class="t" id="t65" style="left:1048.4px;top:25.5px;font-size:12px;color:#1a1a1a;font-weight:bold;transform:scaleX(0.6473);">15:25:04</span>
<span class="t" id="t66" style="left:1091.4px;top:25.5px;font-size:12px;color:#1a1a1a;font-weight:bold;transform:scaleX(0.6796);">Sun, May 7</span>
<span class="t" id="t67" style="left:1146.0px;top:21.9px;font-size:6.6px;color:#1a1a1a;font-weight:bold;transform:scaleX(0.8232);">+3</span>
<span class="t" id="t68" style="left:1158.0px;top:25.5px;font-size:12px;color:#1a1a1a;font-weight:bold;transform:scaleX(0.6452);">14:25:04</span>
<span class="t" id="t69" style="left:647.8px;top:44.0px;font-size:14px;color:#cccccc;font-family:'Liberation Mono',monospace;transform:scaleX(0.5969);">C:\Users\Roman Dávid&gt;Signal monitoring_PF 4.5m_Lučenec/Slovakia_EUT 9B-9°E_12 341 V Multistream_7.5.2023+</span>
<span class="t" id="t70" style="left:568.3px;top:76.5px;font-size:12.8px;color:#b02c2c;font-weight:bold;font-family:'Liberation Serif',serif;transform:scaleX(0.7303);-webkit-text-stroke:.35px #b02c2c;">DX</span>
<span class="t" id="t71" style="left:581.8px;top:76.5px;font-size:12.8px;color:#2a2a78;font-weight:bold;font-family:'Liberation Serif',serif;transform:scaleX(0.6740);-webkit-text-stroke:.35px #2a2a78;">SATCS.COM</span>
<span class="t" id="t72" style="left:5.0px;top:812.8px;font-size:9.5px;color:#1c1c1c;transform:scaleX(0.7023);">Present</span>
<span class="t" id="t73" style="left:5.0px;top:833.8px;font-size:9.5px;color:#1c1c1c;transform:scaleX(0.7222);">Lock</span>
<span class="t" id="t74" style="left:89.0px;top:812.8px;font-size:9.5px;color:#1c1c1c;transform:scaleX(0.7019);">Level: 48%</span>
<span class="t" id="t75" style="left:89.0px;top:833.8px;font-size:9.5px;color:#1c1c1c;transform:scaleX(0.7100);">Quality: 100%</span>
<span class="t" id="t76" style="left:603.5px;top:812.8px;font-size:9.5px;color:#1c1c1c;transform:scaleX(0.6955);">BER: 0,0000000</span>
<span class="t" id="t77" style="left:604.5px;top:833.8px;font-size:9.5px;color:#1c1c1c;transform:scaleX(0.7398);">SNR: 9,5 dB (Margin: 0,2 dB | Very Poor)</span>
<span class="t" id="t78" style="left:1120.5px;top:812.8px;font-size:9.5px;color:#1c1c1c;transform:scaleX(0.7620);">Input (~23,73 Mbps)</span>
<span class="t" id="t79" style="left:1120.5px;top:833.8px;font-size:9.5px;color:#1c1c1c;transform:scaleX(0.6856);">Sync TS</span>
<span class="t" id="t80" style="left:150.0px;top:858.0px;font-size:9.5px;color:#1c1c1c;transform:scaleX(0.7950);">Locked -&gt; Uptime: 12:08:20</span>
<span class="t" id="t81" style="left:556.0px;top:858.0px;font-size:9.5px;color:#1c1c1c;transform:scaleX(0.7283);">SYNC 17 | TEI 0 | CC 656</span>
<span class="t" id="t82" style="left:930.0px;top:858.0px;font-size:9.5px;color:#1c1c1c;transform:scaleX(0.7867);">Best signal: 11,8 dB (2023-05-07 05:48)</span>
<span class="t" id="t83" style="left:430.0px;top:418.2px;font-size:9.5px;color:#8a8a8a;transform:scaleX(0.7729);">Serie A Live (diretta) - VLC media player</span>
<span class="t" id="t84" style="left:417.0px;top:440.2px;font-size:9.5px;color:#a2a2a2;transform:scaleX(0.8285);">Médium</span>
<span class="t" id="t85" style="left:455.0px;top:440.2px;font-size:9.5px;color:#a2a2a2;transform:scaleX(0.7612);">Prehrávanie</span>
<span class="t" id="t86" style="left:504.0px;top:440.2px;font-size:9.5px;color:#a2a2a2;transform:scaleX(0.8255);">Zvuk</span>
<span class="t" id="t87" style="left:531.0px;top:440.2px;font-size:9.5px;color:#a2a2a2;transform:scaleX(0.7871);">Video</span>
<span class="t" id="t88" style="left:560.0px;top:440.2px;font-size:9.5px;color:#a2a2a2;transform:scaleX(0.8115);">Titulky</span>
<span class="t" id="t89" style="left:591.0px;top:440.2px;font-size:9.5px;color:#a2a2a2;transform:scaleX(0.8198);">Nástroje</span>
<span class="t" id="t90" style="left:629.0px;top:440.2px;font-size:9.5px;color:#a2a2a2;transform:scaleX(0.7943);">Zobraziť</span>
<span class="t" id="t91" style="left:668.0px;top:440.2px;font-size:9.5px;color:#a2a2a2;transform:scaleX(0.8047);">Pomocník</span>
<span class="t" id="t92" style="left:415.7px;top:709.2px;font-size:9px;color:#222;transform:scaleX(0.7900);">06:40</span>
<span class="t" id="t93" style="left:692.5px;top:709.2px;font-size:9px;color:#222;transform:scaleX(0.7834);">-06:40</span>
<span class="t" id="t94" style="left:664.3px;top:728.9px;font-size:8px;color:#707070;transform:scaleX(0.7680);">73%</span>
</div>
</body></html>
